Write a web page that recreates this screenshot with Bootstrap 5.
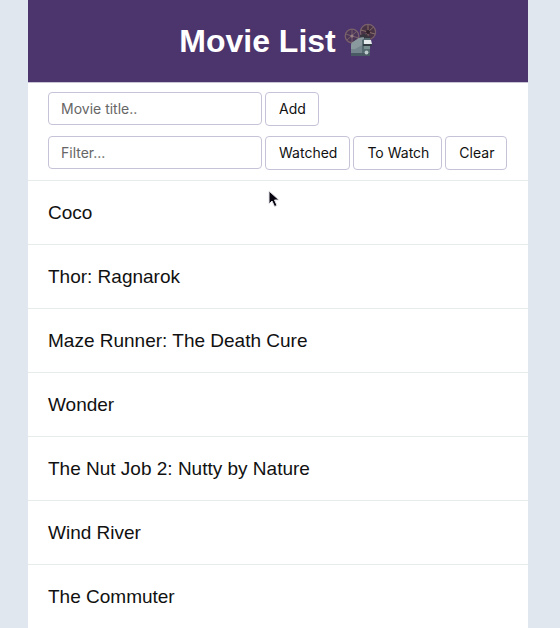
<!DOCTYPE html>
<html lang="en">
<head>
<meta charset="utf-8">
<meta name="viewport" content="width=device-width, initial-scale=1">
<title>Movie List</title>
<link href="https://cdn.jsdelivr.net/npm/bootstrap@5.3.0/dist/css/bootstrap.min.css" rel="stylesheet">
<style>
  body { background: #e0e7ee; color: #111; font-family: "Liberation Sans", Arial, sans-serif; padding-right: 4px; }
  .movie-app { max-width: 500px; }
  .app-header { background: #4c346c; padding: 23px 20px 22px; border-bottom: 1px solid #c9c3d6; }
  .app-title { font-size: 32px; line-height: 37px; }
  .app-title svg { overflow: visible; }
  .tools { padding: 9px 20px 10px; gap: 10px; }
  .tool-row { gap: 3px; }
  .tool-row .form-control, .tool-row .btn {
    border: 1px solid #c6c2d8; border-radius: 4px; padding: 5px 12px;
    font-family: Inter, "Liberation Sans", sans-serif; font-size: 14px; line-height: 22px;
  }
  .tool-row .form-control { max-width: 214px; padding: 0 12px; line-height: 31px; }
  .tool-row .form-control::placeholder { color: #666; }
  .tool-row .btn { color: #111; background: #fff; padding: 5px 12px 5px 13px; }
  .movie-list .list-group-item {
    padding: 16px 20px; border-width: 1px 0 0; border-color: #e6ebec;
    color: #111; font-size: 19px; line-height: 31px; margin-top: 0;
  }
  .pointer { position: absolute; left: 268px; top: 190px; z-index: 2; pointer-events: none; }
</style>
<script src="https://cdn.jsdelivr.net/npm/bootstrap@5.3.0/dist/js/bootstrap.bundle.min.js"></script>
</head>
<body>
<main class="movie-app mx-auto min-vh-100 bg-white">
  <header class="app-header">
    <h1 class="app-title d-flex justify-content-center align-items-center gap-2 m-0 fw-bold text-white">
      Movie List
      <svg width="33" height="36" viewBox="0 2 33 36" role="img" aria-label="Film projector">
        <g fill="#4b3559" stroke="#79616b" stroke-width="1.3">
          <circle cx="8" cy="14" r="6.800"/>
          <path d="M8 7v14M1.500 12l13 4M3 18L13 9" stroke-width="1"/>
          <circle cx="24" cy="10" r="7.600" fill="#483346"/>
          <path d="M24 3v14M17 8l14 4M18.500 15l11-10" stroke="#8b706b" stroke-width="1"/>
        </g>
        <circle cx="8" cy="14" r="1.500" fill="#9a8186"/>
        <circle cx="24" cy="10" r="2" fill="#302029"/>
        <path d="M16 13l5-1 5 3v6H16z" fill="#36343d"/>
        <path d="M7 33V23q0-2 2-3l6-4q1-1 5-1v18z" fill="#76868f"/>
        <path d="M7 23q0-2 2-3l6-4h5v6l-9 5H7z" fill="#8a999e"/>
        <path d="M18 18l3-2h5v17h-8z" fill="#566a72"/>
        <path d="M20 18h7l1 4h-8z" fill="#e5eaec"/>
        <path d="M19 22h9v2h-9z" fill="#303b44"/>
        <path d="M20 24h6v3h-6z" fill="#78908f"/>
        <path d="M7 31h19v3H7z" fill="#4a5a64"/>
        <circle cx="22.500" cy="30.500" r="1.900" fill="#becbcb"/>
      </svg>
    </h1>
  </header>
  <section class="tools d-grid">
    <form class="tool-row d-flex align-items-start" onsubmit="return false">
      <label class="visually-hidden" for="title">Movie title</label>
      <input class="form-control" id="title" type="text" placeholder="Movie title..">
      <button class="btn flex-shrink-0" type="submit">Add</button>
    </form>
    <form class="tool-row d-flex align-items-start" onsubmit="return false">
      <label class="visually-hidden" for="filter">Filter movies</label>
      <input class="form-control" id="filter" type="text" placeholder="Filter...">
      <button class="btn flex-shrink-0" type="button">Watched</button>
      <button class="btn flex-shrink-0" type="button">To Watch</button>
      <button class="btn flex-shrink-0" type="button">Clear</button>
    </form>
  </section>
  <ul class="movie-list list-group list-group-flush">
    <li class="list-group-item">Coco</li>
    <li class="list-group-item">Thor: Ragnarok</li>
    <li class="list-group-item">Maze Runner: The Death Cure</li>
    <li class="list-group-item">Wonder</li>
    <li class="list-group-item">The Nut Job 2: Nutty by Nature</li>
    <li class="list-group-item">Wind River</li>
    <li class="list-group-item">The Commuter</li>
  </ul>
</main>
<svg class="pointer" width="12" height="18" viewBox="0 0 12 18" aria-hidden="true">
  <path d="M1 1v13l3-3 2.500 5.500 2.500-1L6.500 10H11z" fill="#080510" stroke="#e4e4e8" stroke-width="1"/>
</svg>
</body>
</html>
